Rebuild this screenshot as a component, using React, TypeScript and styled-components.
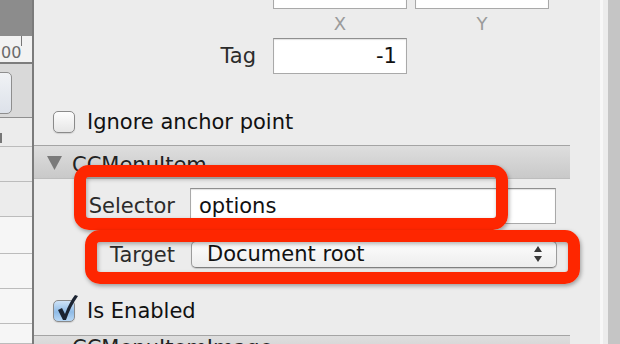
import styled, { createGlobalStyle } from 'styled-components'

const GlobalStyle = createGlobalStyle`
  html, body {
    margin: 0;
    padding: 0;
    background: #ececec;
  }
  body {
    font-family: "DejaVu Sans", "Liberation Sans", sans-serif;
  }
`

const Page = styled.div`
  position: relative;
  display: flex;
  width: 620px;
  height: 344px;
  overflow: hidden;
  background: #ececec;
`

/* ---------- left strip (neighbouring panel) ---------- */

const LeftStrip = styled.div`
  width: 32px;
  flex-shrink: 0;
  display: flex;
  flex-direction: column;
  border-right: 2px solid #7b7b7b;
  overflow: hidden;
`

const StripDark = styled.div`
  height: 40px;
  background: #8c8c8c;
`

const Ruler = styled.div`
  position: relative;
  height: 30px;
  background: #f2f2f2;
  border-bottom: 2px solid #7d7d7d;
  font-size: 16px;
  line-height: 18px;
  color: #6a6a6a;
  padding: 8px 0 0 1px;
  box-sizing: border-box;
  white-space: nowrap;
`

const RulerTick = styled.span`
  position: absolute;
  left: 21px;
  top: 0;
  width: 1px;
  height: 10px;
  background: #777;
`

const ButtonBay = styled.div`
  height: 60px;
  background: #d9d9d9;
  border-bottom: 1px solid #8f8f8f;
  padding-top: 8px;
  box-sizing: border-box;
`

const StubButton = styled.div`
  margin-left: -8px;
  width: 20px;
  height: 42px;
  box-sizing: border-box;
  border: 1px solid #8e8e8e;
  border-radius: 5px;
  background: linear-gradient(#f0f2f5, #dde2ea);
`

const StripRow = styled.div<{ $h: number; $light?: boolean }>`
  height: ${({ $h }) => $h}px;
  flex-shrink: 0;
  box-sizing: border-box;
  background: ${({ $light }) => ($light ? '#f6f6f6' : '#ececec')};
  border-bottom: 1px solid #bcbcbc;
`

const StripMark = styled.div`
  margin-top: 15px;
  width: 2px;
  height: 10px;
  background: #777;
`

/* ---------- inspector ---------- */

const Inspector = styled.div`
  width: 566px;
  flex-shrink: 0;
  display: flex;
  flex-direction: column;
`

const FieldRow = styled.div<{ $top: number; $label: number; $gap: number }>`
  display: flex;
  align-items: center;
  margin-top: ${({ $top }) => $top}px;
  & > :first-child {
    width: ${({ $label }) => $label}px;
    margin-right: ${({ $gap }) => $gap}px;
  }
`

const Label = styled.div`
  flex-shrink: 0;
  text-align: right;
  font-size: 21px;
  color: #2b2b2b;
`

const TextField = styled.div<{ $w: number; $h: number; $align?: string }>`
  width: ${({ $w }) => $w}px;
  height: ${({ $h }) => $h}px;
  box-sizing: border-box;
  background: #fff;
  border: 1px solid #a9a9a9;
  border-top-color: #8f8f8f;
  box-shadow: inset 0 1px 1px rgba(0, 0, 0, 0.12);
  font-size: 21px;
  line-height: ${({ $h }) => $h - 2}px;
  color: #111;
  padding: 0 9px 0 8px;
  text-align: ${({ $align }) => $align || 'left'};
  overflow: hidden;
  white-space: nowrap;
`

const AxisRow = styled.div`
  display: flex;
  margin-top: 5px;
  padding-left: 239px;
  gap: 8px;
`

const AxisLabel = styled.div`
  width: 134px;
  text-align: center;
  font-size: 18px;
  line-height: 20px;
  color: #9b9b9b;
`

const CheckRow = styled.label<{ $top: number }>`
  display: flex;
  align-items: center;
  gap: 12px;
  margin-top: ${({ $top }) => $top}px;
  padding-left: 19px;
  height: 22px;
  font-size: 21px;
  line-height: 22px;
  color: #111;
`

const Box = styled.span<{ $checked?: boolean }>`
  position: relative;
  width: 22px;
  height: 22px;
  box-sizing: border-box;
  border: 1px solid #8a8a8a;
  border-radius: 5px;
  background: ${({ $checked }) =>
    $checked
      ? 'linear-gradient(#cfe3f7, #8fbbe6 55%, #b9d8f5)'
      : 'linear-gradient(#fdfdfd, #e6e6e6)'};
  box-shadow: 0 1px 1px rgba(0, 0, 0, 0.12);
  flex-shrink: 0;
`

const CheckMark = styled.svg`
  position: absolute;
  left: 1px;
  top: -8px;
`

const SectionHeader = styled.div<{ $top: number }>`
  display: flex;
  align-items: center;
  gap: 10px;
  margin-top: ${({ $top }) => $top}px;
  margin-right: 30px;
  height: 34px;
  flex-shrink: 0;
  box-sizing: border-box;
  padding-left: 13px;
  border-top: 1px solid #a4a4a4;
  border-bottom: 1px solid #bdbdbd;
  background: linear-gradient(#dedede, #c9c9c9);
  font-size: 21px;
  color: #222;
`

const HeaderTitle = styled.span<{ $shift: number }>`
  position: relative;
  top: ${({ $shift }) => $shift}px;
`

const Popup = styled.div`
  position: relative;
  width: 366px;
  height: 27px;
  box-sizing: border-box;
  border: 1px solid #9c9c9c;
  border-bottom-color: #7f7f7f;
  border-radius: 5px;
  background: linear-gradient(#fdfdfd, #ededed);
  box-shadow: 0 1px 1px rgba(0, 0, 0, 0.15);
  font-size: 21px;
  line-height: 25px;
  padding-left: 15px;
  color: #111;
  margin-left: 1px;
`

const Arrows = styled.svg`
  position: absolute;
  right: 13px;
  top: 2px;
`

const RightGutter = styled.div`
  flex: 1;
  display: flex;
`

const GutterLine = styled.div`
  width: 3px;
  background: #f7f7f7;
`

const GutterGap = styled.div`
  width: 5px;
  background: #ececec;
`

const ScrollTrack = styled.div`
  flex: 1;
  background: #c5c5c5;
`

/* ---------- annotation boxes ---------- */

const Annotation = styled.div<{ $x: number; $y: number; $w: number; $h: number }>`
  position: absolute;
  left: ${({ $x }) => $x}px;
  top: ${({ $y }) => $y}px;
  width: ${({ $w }) => $w}px;
  height: ${({ $h }) => $h}px;
  box-sizing: border-box;
  border: 12px solid #fe2600;
  border-radius: 15px;
  box-shadow: 1px 2px 4px rgba(0, 0, 0, 0.35), inset 1px 2px 4px rgba(0, 0, 0, 0.3);
  pointer-events: none;
`

function Checkbox({ checked }: { checked?: boolean }) {
  return (
    <Box $checked={checked}>
      {checked && (
        <CheckMark width="24" height="30" viewBox="0 0 24 30">
          <path
            d="M3 17 L7 15 L10 21 C13 13 16 7 20 2 L23 3 C18 10 14 18 11 27 L8 27 Z"
            fill="#1c2432"
          />
        </CheckMark>
      )}
    </Box>
  )
}

function Disclosure() {
  return (
    <svg width="15" height="15" viewBox="0 0 15 15">
      <path d="M0 1 H15 L7.5 15 Z" fill="#7a7a7a" />
    </svg>
  )
}

export default function App() {
  return (
    <>
      <GlobalStyle />
      <Page>
        <LeftStrip>
          <StripDark />
          <Ruler>
            <RulerTick />
            00
          </Ruler>
          <ButtonBay>
            <StubButton />
          </ButtonBay>
          <StripRow $h={29}>
            <StripMark />
          </StripRow>
          <StripRow $h={35} />
          <StripRow $h={35} />
          <StripRow $h={37} $light />
          <StripRow $h={35} $light />
          <StripRow $h={35} $light />
          <StripRow $h={20} $light />
        </LeftStrip>

        <Inspector>
          <FieldRow $top={-27} $label={222} $gap={17}>
            <Label>Position</Label>
            <TextField $w={134} $h={36} $align="right">0.00</TextField>
            <TextField $w={134} $h={36} $align="right" style={{ marginLeft: 8 }}>
              0.00
            </TextField>
          </FieldRow>
          <AxisRow>
            <AxisLabel>X</AxisLabel>
            <AxisLabel>Y</AxisLabel>
          </AxisRow>
          <FieldRow $top={4} $label={222} $gap={17}>
            <Label>Tag</Label>
            <TextField $w={134} $h={36} $align="right">
              -1
            </TextField>
          </FieldRow>

          <CheckRow $top={37}>
            <Checkbox />
            Ignore anchor point
          </CheckRow>

          <SectionHeader $top={12}>
            <Disclosure />
            <HeaderTitle $shift={3}>CCMenuItem</HeaderTitle>
          </SectionHeader>

          <FieldRow $top={9} $label={141} $gap={15}>
            <Label>Selector</Label>
            <TextField $w={366} $h={36}>options</TextField>
          </FieldRow>
          <FieldRow $top={17} $label={141} $gap={15}>
            <Label>Target</Label>
            <Popup>
              Document root
              <Arrows width="10" height="20" viewBox="0 0 10 20">
                <path d="M5 2 L9 8 H1 Z" fill="#3a3a3a" />
                <path d="M5 18 L9 12 H1 Z" fill="#3a3a3a" />
              </Arrows>
            </Popup>
          </FieldRow>

          <CheckRow $top={32}>
            <Checkbox checked />
            Is Enabled
          </CheckRow>

          <SectionHeader $top={13}>
            <Disclosure />
            <HeaderTitle $shift={-4}>CCMenuItemImage</HeaderTitle>
          </SectionHeader>
        </Inspector>

        <RightGutter>
          <GutterLine />
          <GutterGap />
          <ScrollTrack />
        </RightGutter>

        <Annotation $x={74} $y={165} $w={434} $h={65} />
        <Annotation $x={85} $y={230} $w={495} $h={54} />
      </Page>
    </>
  )
}
